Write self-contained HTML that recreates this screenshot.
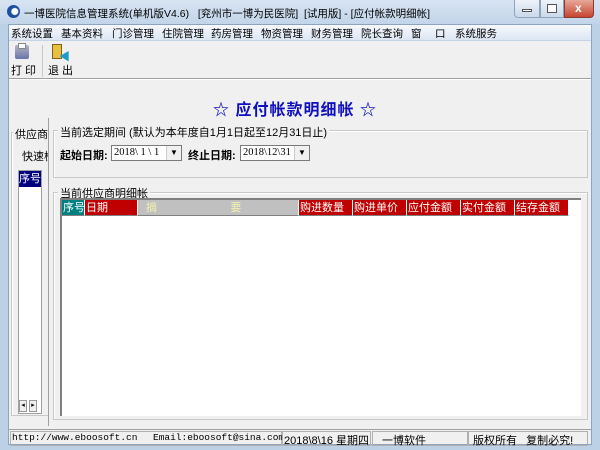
<!DOCTYPE html>
<html><head><meta charset="utf-8"><style>
*{margin:0;padding:0;box-sizing:border-box}
body{width:600px;height:450px;overflow:hidden;background:#bcd0e6;font-family:"Liberation Sans","Noto Sans CJK SC",sans-serif;font-size:11px;color:#000;position:relative}
.a{position:absolute}
.t{font-size:11px;white-space:nowrap}
.gb{border:1px solid #c8c8c8;box-shadow:inset 1px 1px 0 #fff}
.lg{background:#f0f0f0;padding:0 2px}
.hd{position:absolute;top:0;height:16px;color:#fff;background:#c00000;border-right:1px solid #fff;border-bottom:1px solid #808080;font-size:11px;line-height:16px;padding-left:1px;white-space:nowrap;overflow:hidden}
.m{position:absolute;top:26px;font-size:10.5px;white-space:nowrap}
</style></head><body>
<div class="a" style="left:0;top:0;width:600px;height:24px;background:linear-gradient(#d7e4f2,#c3d5ea)"></div>
<div class="a" style="left:7px;top:5px;width:13px;height:13px;border-radius:50%;background:radial-gradient(circle at 60% 50%,#fff 0 3px,#1b4fa0 4px)"></div>
<div class="a t" style="left:24px;top:6px;font-size:10.5px">一博医院信息管理系统(单机版V4.6)&nbsp;&nbsp;&nbsp;[兖州市一博为民医院]&nbsp;&nbsp;[试用版] - [应付帐款明细帐]</div>
<div class="a" style="left:514px;top:0;width:26px;height:18px;border:1px solid #8ea3bd;border-top:none;border-radius:0 0 0 4px;background:linear-gradient(#eef3f9,#cbd9ea)"></div>
<div class="a" style="left:522px;top:9px;width:10px;height:3px;border:1px solid #555;background:#fff"></div>
<div class="a" style="left:540px;top:0;width:24px;height:18px;border:1px solid #8ea3bd;border-top:none;background:linear-gradient(#eef3f9,#cbd9ea)"></div>
<div class="a" style="left:547px;top:4px;width:10px;height:9px;border:1px solid #555;background:#fff"></div>
<div class="a" style="left:564px;top:0;width:30px;height:18px;border:1px solid #8a3a30;border-top:none;border-radius:0 0 4px 0;background:linear-gradient(#e8a89a,#c5452f)"></div>
<div class="a" style="left:575px;top:1px;color:#fff;font-weight:bold;font-size:12px">x</div>
<div class="a" style="left:8px;top:24px;width:584px;height:421px;background:#f0f0f0;border:1px solid #8ea3bd"></div>
<div class="a" style="left:9px;top:25px;width:582px;height:16px;background:linear-gradient(#f6f9fd,#dce6f3);border-bottom:1px solid #c5d3e6"></div>
<div class="m" style="left:11px">系统设置</div>
<div class="m" style="left:61px">基本资料</div>
<div class="m" style="left:112px">门诊管理</div>
<div class="m" style="left:162px">住院管理</div>
<div class="m" style="left:211px">药房管理</div>
<div class="m" style="left:261px">物资管理</div>
<div class="m" style="left:311px">财务管理</div>
<div class="m" style="left:361px">院长查询</div>
<div class="m" style="left:411px">窗</div>
<div class="m" style="left:435px">口</div>
<div class="m" style="left:455px">系统服务</div>
<div class="a" style="left:15px;top:45px;width:14px;height:14px;background:linear-gradient(#b5b5c8,#6a74a8);border-radius:2px"></div>
<div class="a" style="left:18px;top:43px;width:8px;height:6px;background:#fff;border:1px solid #888"></div>
<div class="a t" style="left:11px;top:62px">打 印</div>
<div class="a" style="left:42px;top:45px;width:1px;height:32px;background:#c8c8c8"></div>
<div class="a" style="left:52px;top:44px;width:10px;height:15px;background:#e8c040;border:1px solid #806020"></div>
<div class="a" style="left:59px;top:48px;color:#1a9ad0;font-size:11px;font-weight:bold">◀</div>
<div class="a t" style="left:48px;top:62px">退 出</div>
<div class="a" style="left:9px;top:78px;width:582px;height:2px;border-top:1px solid #a0a0a0;border-bottom:1px solid #fff"></div>
<div class="a" style="left:0;top:96px;width:590px;text-align:center;color:#1010c0;font-weight:bold;font-size:16px;letter-spacing:1px">☆ 应付帐款明细帐 ☆</div>
<div class="a gb" style="left:11px;top:132px;width:42px;height:284px"></div>
<div class="a t lg" style="left:13px;top:126px">供应商</div>
<div class="a t" style="left:22px;top:148px">快速检</div>
<div class="a" style="left:18px;top:170px;width:24px;height:244px;background:#fff;border:1px solid #a0a0a0"></div>
<div class="a t" style="left:19px;top:171px;width:22px;height:16px;background:#000080;color:#fff;line-height:16px">序号</div>
<div class="a" style="left:19px;top:400px;width:8px;height:12px;border:1px solid #999;background:#f0f0f0;font-size:7px;text-align:center">◂</div>
<div class="a" style="left:29px;top:400px;width:8px;height:12px;border:1px solid #999;background:#f0f0f0;font-size:7px;text-align:center">▸</div>
<div class="a" style="left:48px;top:118px;width:543px;height:308px;border-left:1px solid #a0a0a0;background:#f0f0f0"></div>
<div class="a gb" style="left:53px;top:130px;width:535px;height:48px"></div>
<div class="a t lg" style="left:58px;top:124px">当前选定期间 (默认为本年度自1月1日起至12月31日止)</div>
<div class="a t" style="left:60px;top:147px;font-weight:bold">起始日期:</div>
<div class="a" style="left:111px;top:145px;width:71px;height:16px;background:#fff;border:1px solid #7a7a7a;font-family:'Liberation Serif',serif;font-size:10.5px;line-height:14px;padding-left:2px">2018\ 1 \ 1</div>
<div class="a" style="left:166px;top:146px;width:15px;height:14px;background:#f0f0f0;border-left:1px solid #ccc;font-size:8px;text-align:center;line-height:14px">▼</div>
<div class="a t" style="left:188px;top:147px;font-weight:bold">终止日期:</div>
<div class="a" style="left:240px;top:145px;width:70px;height:16px;background:#fff;border:1px solid #7a7a7a;font-family:'Liberation Serif',serif;font-size:10.5px;line-height:14px;padding-left:2px">2018\12\31</div>
<div class="a" style="left:294px;top:146px;width:15px;height:14px;background:#f0f0f0;border-left:1px solid #ccc;font-size:8px;text-align:center;line-height:14px">▼</div>
<div class="a gb" style="left:53px;top:192px;width:535px;height:228px"></div>
<div class="a t lg" style="left:58px;top:185px">当前供应商明细帐</div>
<div class="a" style="left:60px;top:198px;width:521px;height:218px;background:#fff;border-top:2px solid #808080;border-left:2px solid #808080">
 <div class="hd" style="left:0;width:23px;background:#008080">序号</div>
 <div class="hd" style="left:23px;width:53px">日期</div>
 <div class="hd" style="left:76px;width:161px;background:#c0c0c0;color:#f0f0b0;padding-left:8px">摘&nbsp;&nbsp;&nbsp;&nbsp;&nbsp;&nbsp;&nbsp;&nbsp;&nbsp;&nbsp;&nbsp;&nbsp;&nbsp;&nbsp;&nbsp;&nbsp;&nbsp;&nbsp;&nbsp;&nbsp;&nbsp;&nbsp;&nbsp;&nbsp;要</div>
 <div class="hd" style="left:237px;width:54px">购进数量</div>
 <div class="hd" style="left:291px;width:54px">购进单价</div>
 <div class="hd" style="left:345px;width:54px">应付金额</div>
 <div class="hd" style="left:399px;width:54px">实付金额</div>
 <div class="hd" style="left:453px;width:54px">结存金额</div>
</div>
<div class="a" style="left:9px;top:429px;width:582px;height:1px;background:#a0a0a0"></div>
<div class="a" style="left:10px;top:431px;width:272px;height:15px;border:1px solid #b0b0b0"></div>
<div class="a t" style="left:12px;top:432px;font-family:'Liberation Mono',monospace;font-size:9.5px">http://www.eboosoft.cn</div>
<div class="a t" style="left:153px;top:432px;font-family:'Liberation Mono',monospace;font-size:9.5px;width:129px;overflow:hidden">Email:eboosoft@sina.com</div>
<div class="a" style="left:282px;top:431px;width:89px;height:15px;border:1px solid #b0b0b0"></div>
<div class="a t" style="left:284px;top:432px">2018\8\16 星期四</div>
<div class="a" style="left:372px;top:431px;width:96px;height:15px;border:1px solid #b0b0b0"></div>
<div class="a t" style="left:382px;top:432px">一博软件</div>
<div class="a" style="left:468px;top:431px;width:120px;height:15px;border:1px solid #b0b0b0"></div>
<div class="a t" style="left:473px;top:432px">版权所有&nbsp;&nbsp;&nbsp;复制必究!</div>
</body></html>
